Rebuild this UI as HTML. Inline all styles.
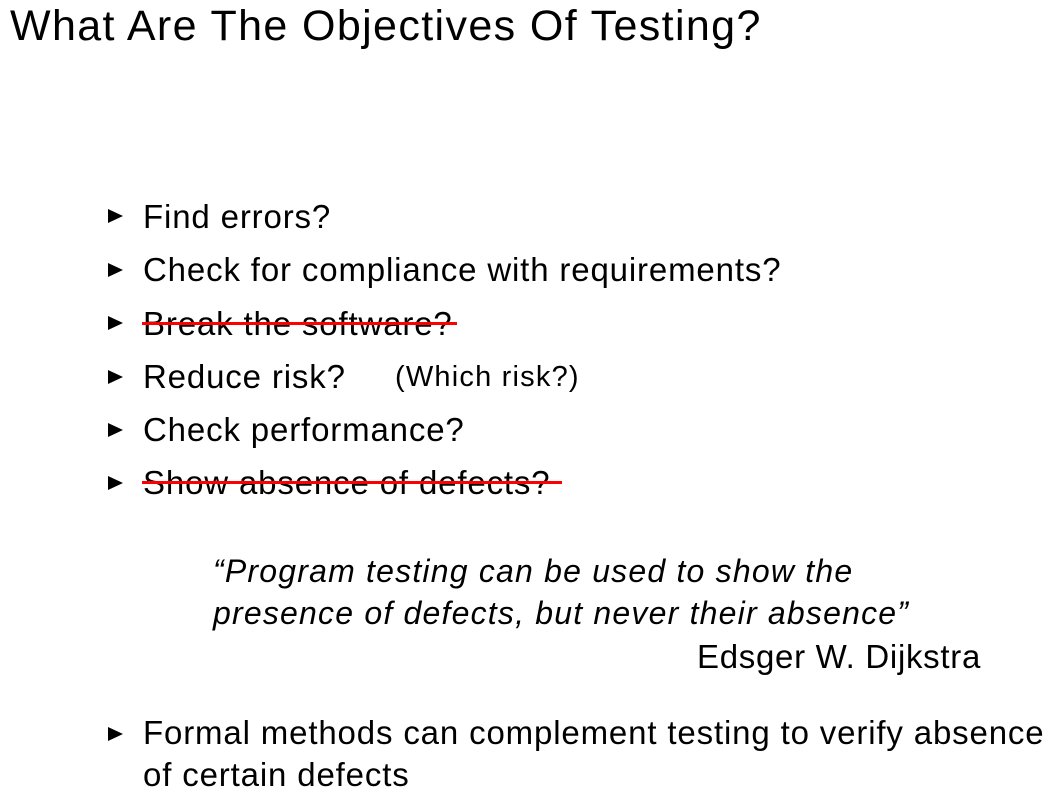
<!DOCTYPE html>
<html><head><meta charset="utf-8"><style>
body{margin:0;width:1050px;height:807px;background:#fff;overflow:hidden;font-family:"Liberation Sans",Arial,sans-serif;color:#000;position:relative}
.a{position:absolute;white-space:nowrap;line-height:1}
.t{font-size:43px;left:10px;top:5px;letter-spacing:1.38px}
.b{font-size:33px;left:143px;letter-spacing:0.85px}
.tri{position:absolute;left:108px;width:0;height:0;border-top:7.5px solid transparent;border-bottom:7.5px solid transparent;border-left:15px solid #000}
.s{position:absolute;height:3px;background:#f00;left:142px}
.q{font-size:32px;font-style:italic;left:213px;letter-spacing:1.2px}
</style></head><body>
<div class="a t">What Are The Objectives Of Testing?</div>

<div class="tri" style="top:209px"></div><div class="a b" style="top:200px">Find errors?</div>
<div class="tri" style="top:263px"></div><div class="a b" style="top:253px">Check for compliance with requirements?</div>
<div class="tri" style="top:316px"></div><div class="a b" style="top:307px">Break the software?</div>
<div class="s" style="top:322px;width:315px"></div>
<div class="tri" style="top:370px"></div><div class="a b" style="top:360px">Reduce risk?</div>
<div class="a" style="font-size:29px;left:395px;top:363px;letter-spacing:1.2px">(Which risk?)</div>
<div class="tri" style="top:423px"></div><div class="a b" style="top:413px">Check performance?</div>
<div class="tri" style="top:476px"></div><div class="a b" style="top:466px">Show absence of defects?</div>
<div class="s" style="top:481px;width:420px"></div>

<div class="a q" style="top:555px">“Program testing can be used to show the</div>
<div class="a q" style="top:597px">presence of defects, but never their absence”</div>
<div class="a" style="font-size:33px;right:69px;top:640px;letter-spacing:0.7px">Edsger W. Dijkstra</div>

<div class="tri" style="top:727px"></div><div class="a b" style="top:716px">Formal methods can complement testing to verify absence</div>
<div class="a b" style="top:758px">of certain defects</div>
</body></html>
